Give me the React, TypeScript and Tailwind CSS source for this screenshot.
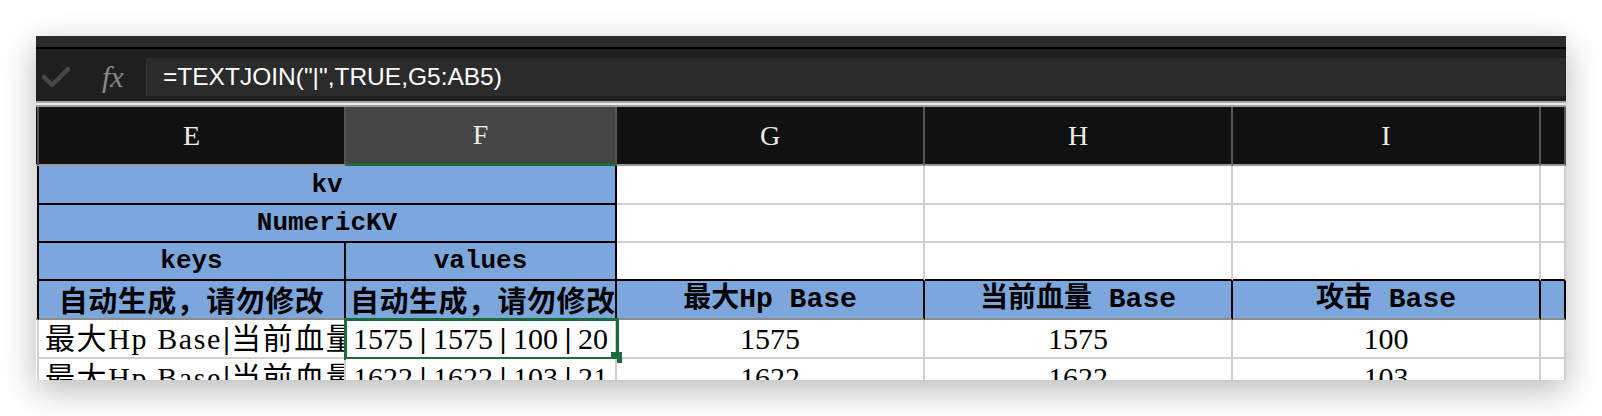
import React from 'react'

const cols = 'grid grid-cols-[3px_307px_271px_308px_308px_308px_1fr]'
const blue = 'bg-[#7ba7dc] border-r-2 border-b-2 border-black flex items-center justify-center overflow-hidden whitespace-nowrap'
const white = 'bg-white border-r-2 border-b-2 border-[#d0d0d0] flex items-center justify-center overflow-hidden whitespace-nowrap'
const mono = "font-['Liberation_Mono','Noto_Sans_CJK_SC',monospace] font-bold text-[26px] leading-none text-black"
const cjkBold = "font-['Noto_Sans_CJK_SC',sans-serif] font-bold text-[29px] leading-none text-black tracking-[0.5px]"
const headMixed = "font-['Liberation_Mono','Noto_Sans_CJK_SC',monospace] font-bold text-[28px] leading-none text-black"
const serif = "font-['Liberation_Serif','Noto_Sans_CJK_SC',serif] text-[30px] leading-none text-black"

function Piped({ text, pipe }: { text: string; pipe: string }) {
  return (
    <>
      {text.split('|').map((p, i) => (
        <React.Fragment key={i}>
          {i > 0 && <span className={pipe}>|</span>}
          {p}
        </React.Fragment>
      ))}
    </>
  )
}

function DataRow({ vals, selected }: { vals: string[]; selected?: boolean }) {
  return (
    <div className={`${cols} h-[39px] shrink-0`}>
      <div className="bg-white border-r-2 border-[#cfcfcf]" />
      <div className={`${white} justify-start pl-[6px] tracking-[1.6px] ${serif}`}>
        <Piped
          text="最大Hp Base|当前血量 Base|攻击 Base"
          pipe="inline-block w-[16px] text-center font-['DejaVu_Serif',serif] text-[27px] tracking-normal"
        />
      </div>
      <div className={`${white} justify-start pl-[7px] relative overflow-visible ${serif}`}>
        <div className="overflow-hidden w-full whitespace-nowrap">
          <Piped
            text={vals[0]}
            pipe="inline-block w-[20px] text-center font-['DejaVu_Serif',serif] text-[27px]"
          />
        </div>
        {selected && (
          <>
            <div className="absolute -left-[2px] -top-[2px] w-[275px] h-[42px] border-[3px] border-[#1e6b3c]" />
            <div className="absolute left-[265px] top-[32px] w-[11px] h-[11px] bg-[#1e6b3c]" />
          </>
        )}
      </div>
      <div className={`${white} ${serif}`}>{vals[1]}</div>
      <div className={`${white} ${serif}`}>{vals[2]}</div>
      <div className={`${white} ${serif}`}>{vals[3]}</div>
      <div className={white} />
    </div>
  )
}

export default function App() {
  return (
    <div className="h-[416px] bg-white pt-[36px] pl-[36px] overflow-hidden">
      <div className="w-[1530px] h-[344px] flex flex-col overflow-hidden bg-white shadow-[0_10px_32px_rgba(0,0,0,0.28)]">
        <div className="h-[11px] bg-[#2b2b2b] shrink-0" />
        <div className="h-[2px] bg-black shrink-0" />
        <div className="h-[52px] bg-[#1f1f1f] flex items-center pt-[4px] shrink-0">
          <svg className="ml-[6px]" width="28" height="22" viewBox="0 0 28 22">
            <polyline points="2,11 10,19 26,3" fill="none" stroke="#484848" strokeWidth="4.5" strokeLinecap="round" strokeLinejoin="round" />
          </svg>
          <span className="ml-[32px] w-[44px] font-['Liberation_Serif',serif] italic text-[30px] leading-none text-[#8a8a8a]">fx</span>
          <div className="flex-1 h-[38px] bg-[#2b2b2b] border-l border-[#353535] flex items-center pl-[16px] font-['Liberation_Sans',sans-serif] text-[24.5px] text-white">
            =TEXTJOIN("|",TRUE,G5:AB5)
          </div>
        </div>
        <div className="h-[6px] shrink-0 bg-[#ececec] border-t-2 border-[#a6a6a6] border-b-2 border-b-[#9c9c9c]" />

        <div className={`${cols} h-[59px] shrink-0`}>
          <div className="bg-[#111111] border-r-2 border-[#555555] border-b-2 border-b-[#9a9a9a]" />
          {['E', 'F', 'G', 'H', 'I', ''].map((c) => (
            <div
              key={c}
              className={
                c === 'F'
                  ? "bg-[#454545] border-r-2 border-r-[#555555] border-b-[3px] border-b-[#1e6b3c] flex items-center justify-center font-['Liberation_Serif',serif] text-[28px] text-[#ececec]"
                  : "bg-[#111111] border-r-2 border-r-[#555555] border-b-2 border-b-[#9a9a9a] flex items-center justify-center font-['Liberation_Serif',serif] text-[28px] text-[#ececec]"
              }
            >
              {c}
            </div>
          ))}
        </div>

        <div className={`${cols} h-[39px] shrink-0`}>
          <div className="bg-[#dddddd] border-r-2 border-black" />
          <div className={`${blue} col-span-2 ${mono}`}>kv</div>
          <div className={white} />
          <div className={white} />
          <div className={white} />
          <div className={white} />
        </div>

        <div className={`${cols} h-[38px] shrink-0`}>
          <div className="bg-[#dddddd] border-r-2 border-black" />
          <div className={`${blue} col-span-2 ${mono}`}>NumericKV</div>
          <div className={white} />
          <div className={white} />
          <div className={white} />
          <div className={white} />
        </div>

        <div className={`${cols} h-[38px] shrink-0`}>
          <div className="bg-[#dddddd] border-r-2 border-black" />
          <div className={`${blue} ${mono}`}>keys</div>
          <div className={`${blue} ${mono}`}>values</div>
          <div className={`${white} border-b-black`} />
          <div className={`${white} border-b-black`} />
          <div className={`${white} border-b-black`} />
          <div className={`${white} border-b-black`} />
        </div>

        <div className={`${cols} h-[39px] shrink-0`}>
          <div className="bg-[#dddddd] border-r-2 border-black border-b-2 border-b-[#8c8c8c]" />
          <div className={`${blue} border-b-[#8c8c8c] ${cjkBold}`}>自动生成，请勿修改</div>
          <div className={`${blue} border-b-[#8c8c8c] justify-start pl-[4px] ${cjkBold}`}>自动生成，请勿修改</div>
          <div className={`${blue} border-b-[#8c8c8c] ${headMixed}`}>最大Hp Base</div>
          <div className={`${blue} border-b-[#8c8c8c] ${headMixed}`}>当前血量 Base</div>
          <div className={`${blue} border-b-[#8c8c8c] ${headMixed}`}>攻击 Base</div>
          <div className={`${blue} border-r-0 border-b-[#8c8c8c]`} />
        </div>

        <DataRow vals={['1575|1575|100|20', '1575', '1575', '100']} selected />
        <DataRow vals={['1622|1622|103|21', '1622', '1622', '103']} />
      </div>
    </div>
  )
}
